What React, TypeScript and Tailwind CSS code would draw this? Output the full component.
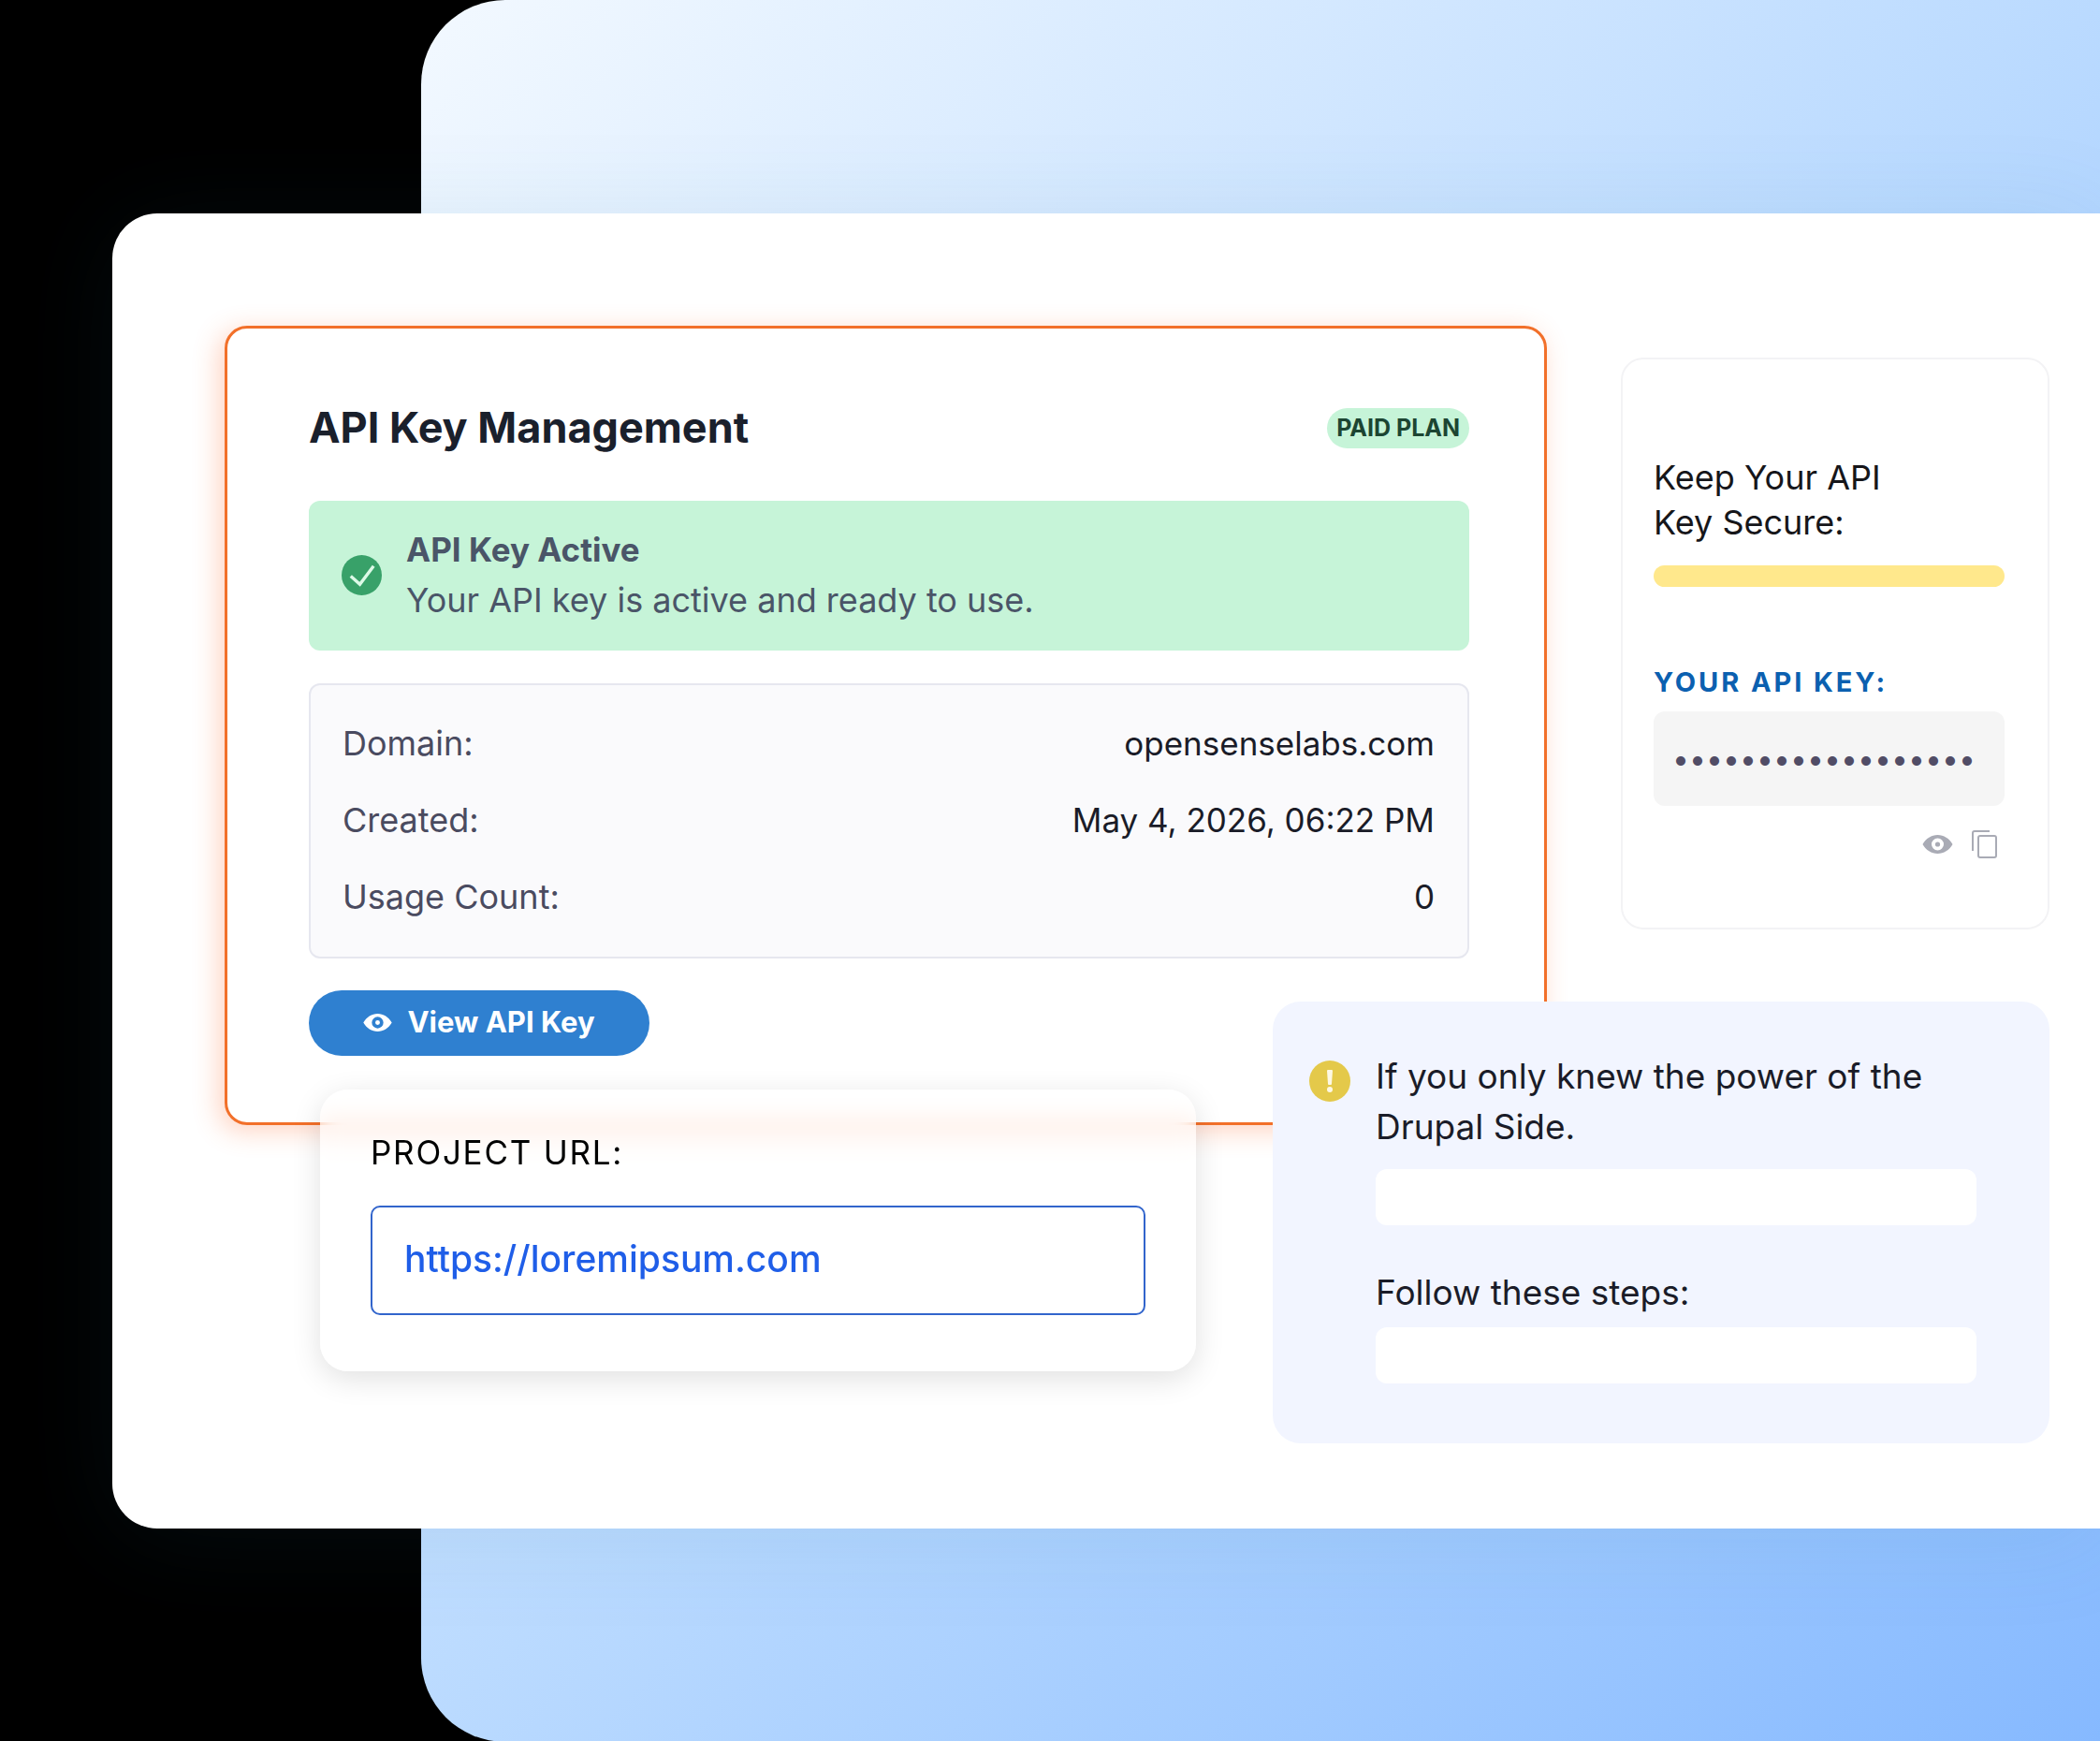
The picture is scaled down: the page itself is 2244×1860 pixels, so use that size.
import { useState } from "react"

const details = [
  { label: "Domain:", value: "opensenselabs.com" },
  { label: "Created:", value: "May 4, 2026, 06:22 PM" },
  { label: "Usage Count:", value: "0" },
]

interface IconProps {
  className?: string
}

const EyeIcon: React.FC<IconProps> = ({ className }) => (
  <svg viewBox="0 0 32 20" className={className} fill="currentColor" aria-hidden="true">
    <path
      fillRule="evenodd"
      d="M16 0C9.500 0 3.500 3.800 0 10c3.500 6.200 9.500 10 16 10s12.500-3.800 16-10C28.500 3.800 22.500 0 16 0Zm0 3.500a6.500 6.500 0 1 1 0 13 6.500 6.500 0 0 1 0-13Z"
    />
    <circle cx="16" cy="10" r="2.600" />
  </svg>
)

const CopyIcon: React.FC<IconProps> = ({ className }) => (
  <svg viewBox="0 0 27 30" className={className} fill="none" stroke="currentColor" strokeWidth="2" aria-hidden="true">
    <path d="M1 22V3a2 2 0 0 1 2-2h16" />
    <rect x="7" y="6" width="19" height="23" rx="2" />
  </svg>
)

const CheckIcon: React.FC<IconProps> = ({ className }) => (
  <svg viewBox="0 0 44 44" className={className} aria-hidden="true">
    <circle cx="22" cy="22" r="22" fill="#38a169" />
    <path d="M10 23l10 9L35 12" fill="none" stroke="#dcf9e7" strokeWidth="3.500" />
  </svg>
)

const WarningIcon: React.FC<IconProps> = ({ className }) => (
  <svg viewBox="0 0 44 44" className={className} aria-hidden="true">
    <circle cx="22" cy="22" r="22" fill="#e4c94a" />
    <path d="M20 10h4a1 1 0 0 1 1 1l-1 14a1 1 0 0 1-1 1h-2a1 1 0 0 1-1-1l-1-14a1 1 0 0 1 1-1Z" fill="#fdf8e4" />
    <circle cx="22" cy="31" r="3" fill="#fdf8e4" />
  </svg>
)

const KeyManagement: React.FC = () => (
  <section className="min-w-0 flex-1 rounded-[24px] border-[3px] border-[#f2702a] bg-white pt-[74px] pr-[80px] pb-[71px] pl-[87px] shadow-[-6px_6px_28px_rgba(255,110,50,0.3)]">
    <div className="flex items-center justify-between">
      <h1 className="text-[45px] leading-[64px] font-bold text-[#1a202c]">API Key Management</h1>
      <span className="rounded-full bg-[#c6f4d8] px-[10px] text-[25px] leading-[43px] font-bold text-[#1c4532]">
        PAID PLAN
      </span>
    </div>
    <div className="mt-[46px] flex items-center gap-[26px] rounded-xl bg-[#c6f4d8] pt-[25px] pb-[27px] pl-[35px] leading-[54px] text-[#4a5568]">
      <CheckIcon className="size-[43px]" />
      <div>
        <p className="text-[35px] font-bold">API Key Active</p>
        <p className="text-[36px]">Your API key is active and ready to use.</p>
      </div>
    </div>
    <dl className="mt-[35px] rounded-xl border-2 border-[#e6e7ef] bg-[#fafafc] pt-[21px] pr-[35px] pb-[23px] pl-[34px] leading-[82px]">
      {details.map(({ label, value }) => (
        <div key={label} className="flex justify-between">
          <dt className="text-[36px] text-[#4a4b60]">{label}</dt>
          <dd className="text-[35px] text-[#1a1c28]">{value}</dd>
        </div>
      ))}
    </dl>
    <button className="mt-[34px] flex h-[70px] w-[364px] items-center justify-center gap-4 rounded-full bg-[#2f80d0] pb-[2px] text-[31px] font-bold text-white">
      <EyeIcon className="h-[19px] w-[31px]" />
      View API Key
    </button>
  </section>
)

const SecureKey: React.FC = () => {
  const [visible, setVisible] = useState(false)

  return (
    <aside className="mt-[34px] flex w-[458px] flex-col rounded-[24px] border-2 border-[#f3f3f5] bg-white pt-[102px] pr-[46px] pb-[74px] pl-[33px]">
      <p className="text-[36px] leading-12 text-[#16161a]">
        Keep Your API
        <br />
        Key Secure:
      </p>
      <div className="mt-[22px] h-[23px] rounded-full bg-[#ffe88c]" />
      <label htmlFor="api-key" className="mt-[80px] text-[29px] leading-[43px] font-bold tracking-widest text-[#0b60b0]">
        YOUR API KEY:
      </label>
      <input
        id="api-key"
        type={visible ? "text" : "password"}
        readOnly
        value="sk-live-0a1b2c3d4e"
        className="mt-[10px] h-[101px] w-full rounded-xl bg-[#f5f5f5] px-[20px] text-[32px] text-[#514d66]"
      />
      <div className="mt-[26px] flex items-center justify-end gap-5 pr-2 text-[#a9abb5]">
        <button aria-label="Show key" onClick={() => setVisible(!visible)}>
          <EyeIcon className="h-[20px] w-[33px]" />
        </button>
        <button aria-label="Copy key">
          <CopyIcon className="h-[30px] w-[27px]" />
        </button>
      </div>
    </aside>
  )
}

const ProjectUrl: React.FC = () => (
  <section className="z-10 -mt-[38px] w-[936px] rounded-[30px] bg-white/60 px-[54px] pt-[40px] pb-[60px] shadow-[0_8px_32px_rgba(0,0,0,0.12)] backdrop-blur-md">
    <label htmlFor="project-url" className="block text-[35px] leading-[54px] tracking-wider text-black">
      PROJECT URL:
    </label>
    <input
      id="project-url"
      type="text"
      defaultValue="https://loremipsum.com"
      className="mt-[30px] h-[117px] w-full rounded-[10px] border-2 border-[#3265cc] bg-white px-[34px] pb-1 text-[39px] font-medium text-[#1f5ee8]"
    />
  </section>
)

const StepsNotice: React.FC = () => (
  <section className="z-10 -mt-[132px] flex w-[830px] items-start gap-[27px] rounded-[30px] bg-[#f2f5ff] pt-[53px] pr-[78px] pb-[64px] pl-[39px] text-[37px] leading-[54px] text-[#1a1c28]">
    <WarningIcon className="mt-[10px] size-[44px] shrink-0" />
    <div className="min-w-0 flex-1">
      <p>
        If you only knew the power of the
        <br />
        Drupal Side.
      </p>
      <div className="mt-[18px] h-[60px] rounded-xl bg-white" />
      <p className="mt-[45px]">Follow these steps:</p>
      <div className="mt-[10px] h-[60px] rounded-xl bg-white" />
    </div>
  </section>
)

const App: React.FC = () => (
  <div className="grid min-h-screen bg-black font-['Inter',sans-serif]">
    <div className="col-start-1 row-start-1 ml-[450px] rounded-l-[90px] bg-linear-to-br from-[#f3f9ff] via-[#badaff] to-[#86b9ff]" />
    <main className="col-start-1 row-start-1 my-[228px] ml-[120px] rounded-l-[48px] bg-white pt-[120px] pr-[54px] pb-[91px] pl-[120px] shadow-[0_10px_110px_rgba(40,120,150,0.1)]">
      <div className="flex items-start gap-[79px]">
        <KeyManagement />
        <SecureKey />
      </div>
      <div className="flex items-start justify-between pl-[102px]">
        <ProjectUrl />
        <StepsNotice />
      </div>
    </main>
  </div>
)

export default App
